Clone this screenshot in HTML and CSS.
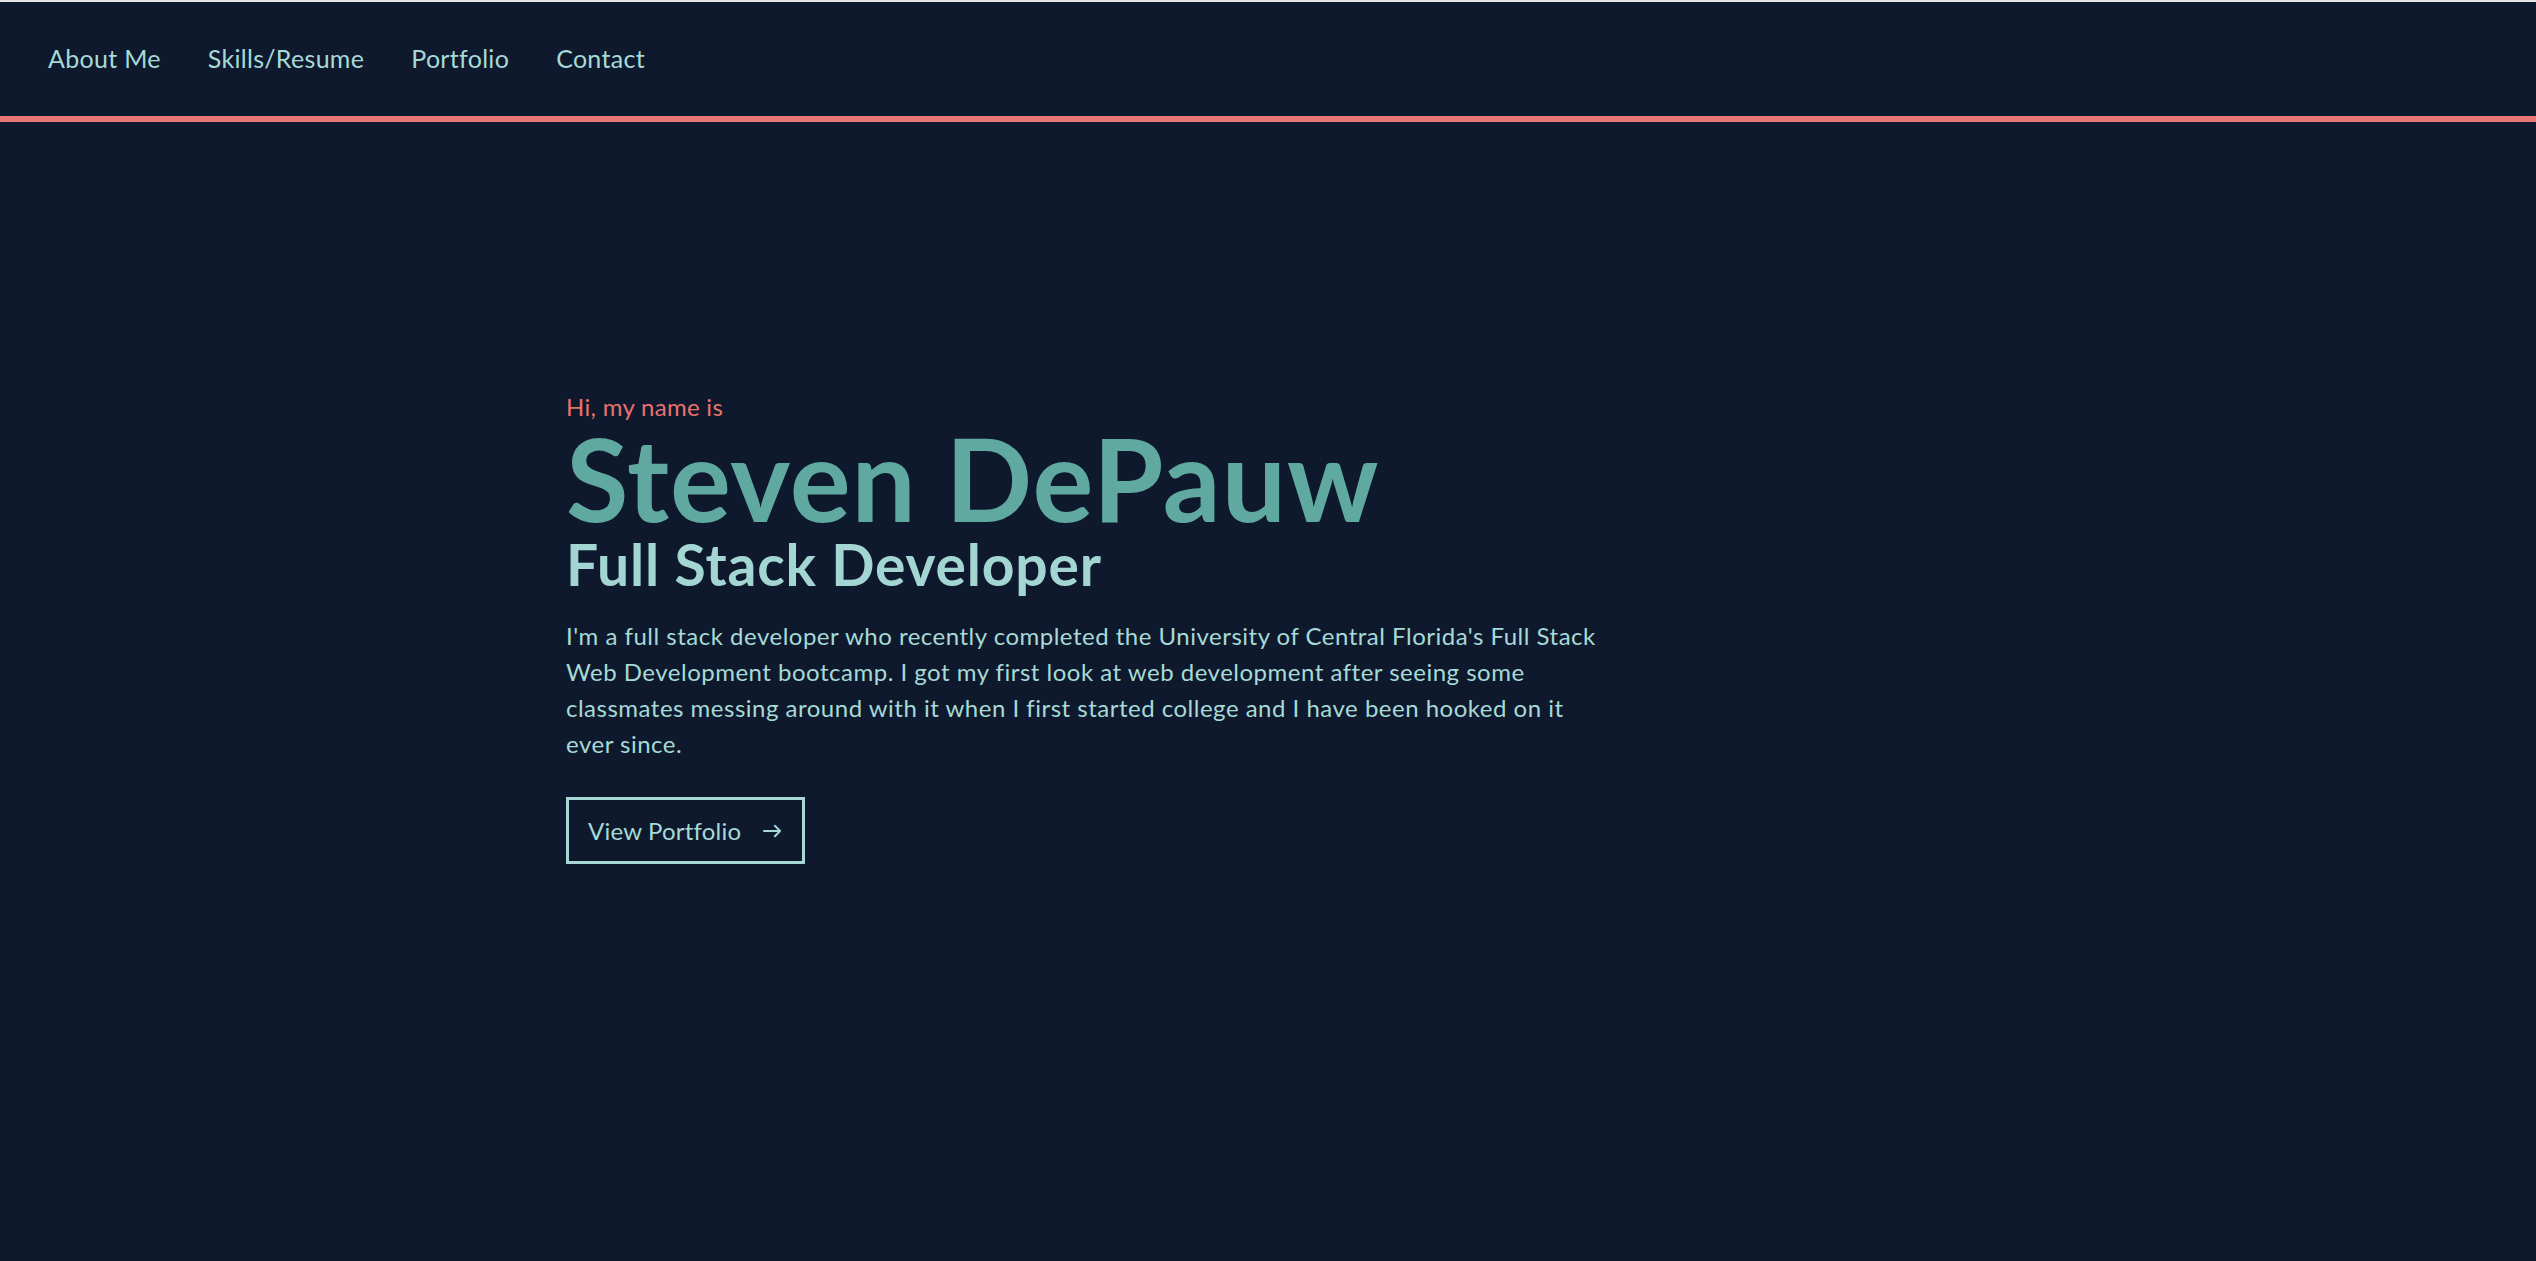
FILE: index.html
```html
<!DOCTYPE html>
<html lang="en">
<head>
<meta charset="utf-8">
<title>Steven DePauw</title>
<link rel="stylesheet" href="styles.css">
</head>
<body>
<header class="site-header">
  <nav class="nav">
    <a class="nav-link" href="#about">About Me</a>
    <a class="nav-link" href="#skills">Skills/Resume</a>
    <a class="nav-link" href="#portfolio">Portfolio</a>
    <a class="nav-link" href="#contact">Contact</a>
  </nav>
</header>
<main class="hero">
  <div class="hero-inner">
    <p class="hero-greeting">Hi, my name is</p>
    <h1 class="hero-name">Steven DePauw</h1>
    <h2 class="hero-title">Full Stack Developer</h2>
    <p class="hero-text">I'm a full stack developer who recently completed the University of Central Florida's Full Stack Web Development bootcamp. I got my first look at web development after seeing some classmates messing around with it when I first started college and I have been hooked on it ever since.</p>
    <a class="hero-button" href="#portfolio">
      <span>View Portfolio</span>
      <svg class="hero-arrow" viewBox="0 0 20 14" width="19" height="14" aria-hidden="true">
        <path d="M1 7 H18 M12.5 1.5 L18 7 L12.5 12.5" fill="none" stroke="currentColor" stroke-width="2" stroke-linecap="round" stroke-linejoin="round"/>
      </svg>
    </a>
  </div>
</main>
</body>
</html>
```

FILE: styles.css
```css
* {
  box-sizing: border-box;
}

html, body {
  margin: 0;
  padding: 0;
}

body {
  background: #0f192d;
  border-top: 2px solid #e5e6ea;
  font-family: Lato, "Open Sans", sans-serif;
  color: #a6dad6;
  min-height: 100vh;
}

.site-header {
  height: 120px;
  border-bottom: 6px solid #e87672;
  display: flex;
  align-items: center;
  padding-left: 48px;
}

.nav {
  display: flex;
  gap: 47px;
  margin-top: -2px;
}

.nav-link {
  color: #a6dad6;
  text-decoration: none;
  font-size: 25px;
  line-height: 1;
  letter-spacing: 0.3px;
}

.hero {
  padding-top: 273px;
}

.hero-inner {
  width: 1404px;
  margin: 0 auto;
}

.hero-greeting {
  margin: 0;
  color: #e8726d;
  font-size: 24px;
  line-height: 24px;
  letter-spacing: 0.3px;
}

.hero-name {
  margin: 0;
  color: #5fa9a1;
  font-size: 114px;
  font-weight: 700;
  line-height: 117px;
  letter-spacing: 1px;
}

.hero-title {
  margin: 0;
  color: #a3d6d3;
  font-size: 57px;
  font-weight: 700;
  line-height: 56px;
  letter-spacing: 0.8px;
}

.hero-text {
  margin: 26px 0 0;
  max-width: 1040px;
  font-size: 24px;
  line-height: 36px;
  letter-spacing: 0.5px;
  color: #a6dad6;
}

.hero-button {
  margin-top: 35px;
  display: inline-flex;
  align-items: center;
  gap: 22px;
  height: 67px;
  padding: 0 20px 0 19px;
  border: 3px solid #a8d8d5;
  color: #a6dad6;
  text-decoration: none;
  font-size: 24px;
  letter-spacing: 0.2px;
}

.hero-arrow {
  display: block;
}
```
